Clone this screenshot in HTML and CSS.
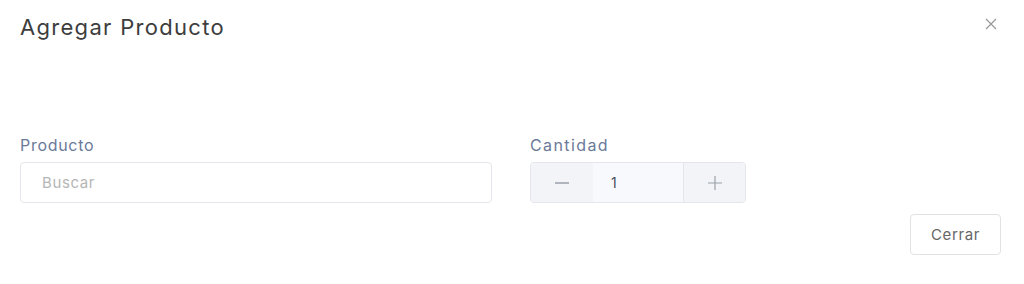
FILE: index.html
```html
<!DOCTYPE html>
<html lang="es">
<head>
<meta charset="utf-8">
<link rel="stylesheet" href="styles.css">
</head>
<body>
<div class="modal">
  <div class="modal-header">
    <h5 class="modal-title">Agregar Producto</h5>
    <button class="btn-close" aria-label="Close">
      <svg width="12" height="12" viewBox="0 0 12 12"><path d="M1 1L11 11M11 1L1 11" stroke="#9a9a9a" stroke-width="1.3" fill="none"/></svg>
    </button>
  </div>
  <div class="modal-body">
    <div class="form-row">
      <div class="field field-product">
        <label class="label">Producto</label>
        <input class="input" type="text" placeholder="Buscar">
      </div>
      <div class="field field-qty">
        <label class="label">Cantidad</label>
        <div class="qty-group">
          <button class="qty-btn">
            <svg width="14" height="2" viewBox="0 0 14 2"><path d="M0 1H14" stroke="#9aa0aa" stroke-width="1.3"/></svg>
          </button>
          <div class="qty-value">1</div>
          <button class="qty-btn qty-plus">
            <svg width="14" height="14" viewBox="0 0 14 14"><path d="M0 7H14M7 0V14" stroke="#9aa0aa" stroke-width="1.2"/></svg>
          </button>
        </div>
      </div>
    </div>
  </div>
  <div class="modal-footer">
    <button class="btn">Cerrar</button>
  </div>
</div>
</body>
</html>
```
FILE: styles.css
```css
* { box-sizing: border-box; }
html, body { margin: 0; padding: 0; background: #fff; }
body { font-family: "Inter", "Noto Sans", sans-serif; }

.modal { width: 1024px; height: 284px; }

.modal-header {
  display: flex;
  justify-content: space-between;
  align-items: flex-start;
  padding: 12px 20px 0 20px;
}
.modal-title {
  margin: 0;
  font-size: 22px;
  font-weight: 400;
  line-height: 30px;
  color: #3d3d3d;
  letter-spacing: 1.3px;
}
.btn-close {
  border: 0;
  background: none;
  padding: 0;
  margin: 5px 6px 0 0;
  width: 14px;
  height: 14px;
  display: flex;
  align-items: center;
  justify-content: center;
}

.modal-body { padding: 92px 20px 0 20px; }
.form-row {
  display: grid;
  grid-template-columns: 472px 216px;
  column-gap: 38px;
}
.field { display: flex; flex-direction: column; }
.label {
  font-size: 16px;
  line-height: 22px;
  color: #6b7a99;
  margin-bottom: 6px;
  letter-spacing: 0.7px;
}
.field-qty .label { letter-spacing: 1.4px; }
.input {
  height: 41px;
  border: 1px solid #e4e6eb;
  border-radius: 4px;
  padding: 0 21px;
  font-family: inherit;
  font-size: 15px;
  letter-spacing: 0.6px;
  color: #333;
  outline: none;
}
.input::placeholder { color: #b6b6b6; }

.qty-group {
  display: flex;
  height: 41px;
  border: 1px solid #e4e6eb;
  border-radius: 4px;
  background: #f6f7fb;
  overflow: hidden;
}
.qty-btn {
  width: 62px;
  border: 0;
  background: #f3f4f8;
  display: flex;
  align-items: center;
  justify-content: center;
  padding: 0;
}
.qty-plus { border-left: 1px solid #e4e6eb; }
.qty-value {
  flex: 1;
  display: flex;
  align-items: center;
  padding-left: 18px;
  font-size: 14px;
  color: #4a4f5c;
  background: #f8f9fc;
}

.modal-footer {
  display: flex;
  justify-content: flex-end;
  padding: 11px 23px 0 0;
}
.btn {
  width: 91px;
  height: 41px;
  border: 1px solid #e2e2e2;
  border-radius: 4px;
  background: #fff;
  font-family: inherit;
  font-size: 15px;
  letter-spacing: 0.6px;
  color: #666;
}
```
